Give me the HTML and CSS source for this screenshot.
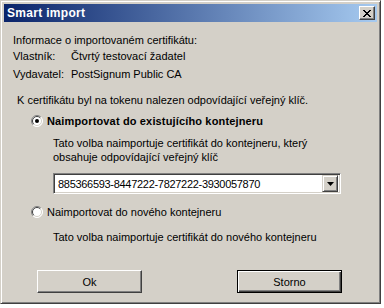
FILE: index.html
```html
<!DOCTYPE html>
<html lang="cs">
<head>
  <meta charset="UTF-8" />
  <title>Smart import</title>
  <link rel="stylesheet" href="styles.css">
</head>
<body>
<div class="window">
  <div class="titlebar">
    <span class="title">Smart import</span>
    <button class="close-btn" aria-label="Zavřít">
      <svg width="8" height="7" viewBox="0 0 8 7"><path d="M0 0h2v1h1v1h2v-1h1v-1h2v1h-1v1h-1v1h-1v1h1v1h1v1h1v1h-2v-1h-1v-1h-2v1h-1v1h-2v-1h1v-1h1v-1h1v-1h-1v-1h-1v-1h-1z" fill="#000"/></svg>
    </button>
  </div>

  <div class="content">
    <div class="info">Informace o importovaném certifikátu:</div>
    <div class="field owner"><span class="label">Vlastník:</span><span>Čtvrtý testovací žadatel</span></div>
    <div class="field issuer"><span class="label">Vydavatel:</span><span>PostSignum Public CA</span></div>

    <div class="notice">K certifikátu byl na tokenu nalezen odpovídající veřejný klíč.</div>

    <label class="option checked">
      <svg class="radio" width="12" height="12" viewBox="0 0 12 12">
        <circle cx="6" cy="6" r="5.5" fill="#fff"/>
        <path d="M9.9 2.1A5.5 5.5 0 0 0 2.1 9.9" fill="none" stroke="#808080"/>
        <path d="M9.9 2.1A5.5 5.5 0 0 1 2.1 9.9" fill="none" stroke="#fff"/>
        <path d="M9.2 2.8A4.5 4.5 0 0 0 2.8 9.2" fill="none" stroke="#404040"/>
        <path d="M9.2 2.8A4.5 4.5 0 0 1 2.8 9.2" fill="none" stroke="#d4d0c8"/>
        <circle cx="6" cy="6" r="2" fill="#000"/>
      </svg>
      <span class="option-label">Naimportovat do existujícího kontejneru</span>
    </label>
    <div class="hint">Tato volba naimportuje certifikát do kontejneru, který<br>obsahuje odpovídající veřejný klíč</div>

    <div class="combo">
      <span class="combo-value">885366593-8447222-7827222-3930057870</span>
      <span class="combo-btn">
        <svg width="7" height="4" viewBox="0 0 7 4"><path d="M0 0h7l-3.5 4z" fill="#000"/></svg>
      </span>
    </div>

    <label class="option">
      <svg class="radio" width="12" height="12" viewBox="0 0 12 12">
        <circle cx="6" cy="6" r="5.5" fill="#fff"/>
        <path d="M9.9 2.1A5.5 5.5 0 0 0 2.1 9.9" fill="none" stroke="#808080"/>
        <path d="M9.9 2.1A5.5 5.5 0 0 1 2.1 9.9" fill="none" stroke="#fff"/>
        <path d="M9.2 2.8A4.5 4.5 0 0 0 2.8 9.2" fill="none" stroke="#404040"/>
        <path d="M9.2 2.8A4.5 4.5 0 0 1 2.8 9.2" fill="none" stroke="#d4d0c8"/>
      </svg>
      <span>Naimportovat do nového kontejneru</span>
    </label>
    <div class="hint hint-new">Tato volba naimportuje certifikát do nového kontejneru</div>

    <div class="actions">
      <button class="btn">Ok</button>
      <button class="btn btn-default">Storno</button>
    </div>
  </div>
</div>
</body>
</html>
```

FILE: styles.css
```css
:root {
  --face: #d4d0c8;
  --light: #ffffff;
  --shadow: #808080;
  --dark: #404040;
  --title-start: #0a246a;
  --title-end: #a6caf0;
}

body {
  margin: 0;
  background: #fff;
  font-family: "Liberation Sans", Arial, sans-serif;
  font-size: 11px;
  color: #000;
}

.window {
  width: 381px;
  height: 304px;
  box-sizing: border-box;
  background: var(--face);
  border: 1px solid;
  border-color: var(--face) var(--dark) var(--dark) var(--face);
  box-shadow: inset 1px 1px 0 var(--light), inset -1px -1px 0 var(--shadow);
  padding: 3px;
}

.titlebar {
  height: 18px;
  display: flex;
  align-items: center;
  justify-content: space-between;
  background: linear-gradient(to right, var(--title-start), var(--title-end));
  padding: 0 2px 0 3px;
}

.title {
  color: #fff;
  font-weight: bold;
  font-size: 12px;
  letter-spacing: 0.3px;
}

.close-btn {
  width: 16px;
  height: 14px;
  padding: 0;
  display: flex;
  align-items: center;
  justify-content: center;
  background: var(--face);
  border: 1px solid;
  border-color: var(--light) var(--dark) var(--dark) var(--light);
  box-shadow: inset -1px -1px 0 var(--shadow);
}

.content {
  padding: 0 0 0 9px;
  line-height: 14px;
}

.info {
  margin-top: 11px;
}

.field {
  display: flex;
}

.owner {
  margin-top: 2px;
}

.issuer {
  margin-top: 4px;
}

.label {
  width: 58px;
}

.notice {
  margin-top: 12px;
  padding-left: 4px;
}

.option {
  display: flex;
  align-items: center;
  gap: 4px;
  margin: 7px 0 0 18px;
}

.option-label {
  font-weight: bold;
  letter-spacing: 0.15px;
}

.hint {
  margin: 8px 0 0 40px;
}

.combo {
  display: flex;
  align-items: center;
  justify-content: space-between;
  width: 288px;
  height: 21px;
  box-sizing: border-box;
  margin: 9px 0 0 40px;
  background: #fff;
  border: 1px solid;
  border-color: var(--shadow) var(--light) var(--light) var(--shadow);
  box-shadow: inset 1px 1px 0 var(--dark), inset -1px -1px 0 var(--face);
  padding: 2px;
}

.combo-value {
  padding-left: 2px;
  letter-spacing: -0.3px;
}

.combo-btn {
  width: 16px;
  height: 17px;
  box-sizing: border-box;
  display: flex;
  align-items: center;
  justify-content: center;
  background: var(--face);
  border: 1px solid;
  border-color: var(--face) var(--dark) var(--dark) var(--face);
  box-shadow: inset 1px 1px 0 var(--light), inset -1px -1px 0 var(--shadow);
}

.option + .hint-new,
.combo + .option {
  margin-top: 11px;
}

.hint-new {
  margin-top: 8px;
}

.actions {
  display: flex;
  gap: 95px;
  margin: 26px 0 0 24px;
}

.btn {
  width: 105px;
  height: 23px;
  padding: 0;
  font-family: inherit;
  font-size: 11px;
  color: #000;
  background: var(--face);
  border: 1px solid;
  border-color: var(--light) var(--dark) var(--dark) var(--light);
  box-shadow: inset -1px -1px 0 var(--shadow), inset 1px 1px 0 var(--face);
}

.btn-default {
  border-color: #000;
  box-shadow: inset 1px 1px 0 var(--light), inset -1px -1px 0 var(--dark), inset -2px -2px 0 var(--shadow);
}
```
